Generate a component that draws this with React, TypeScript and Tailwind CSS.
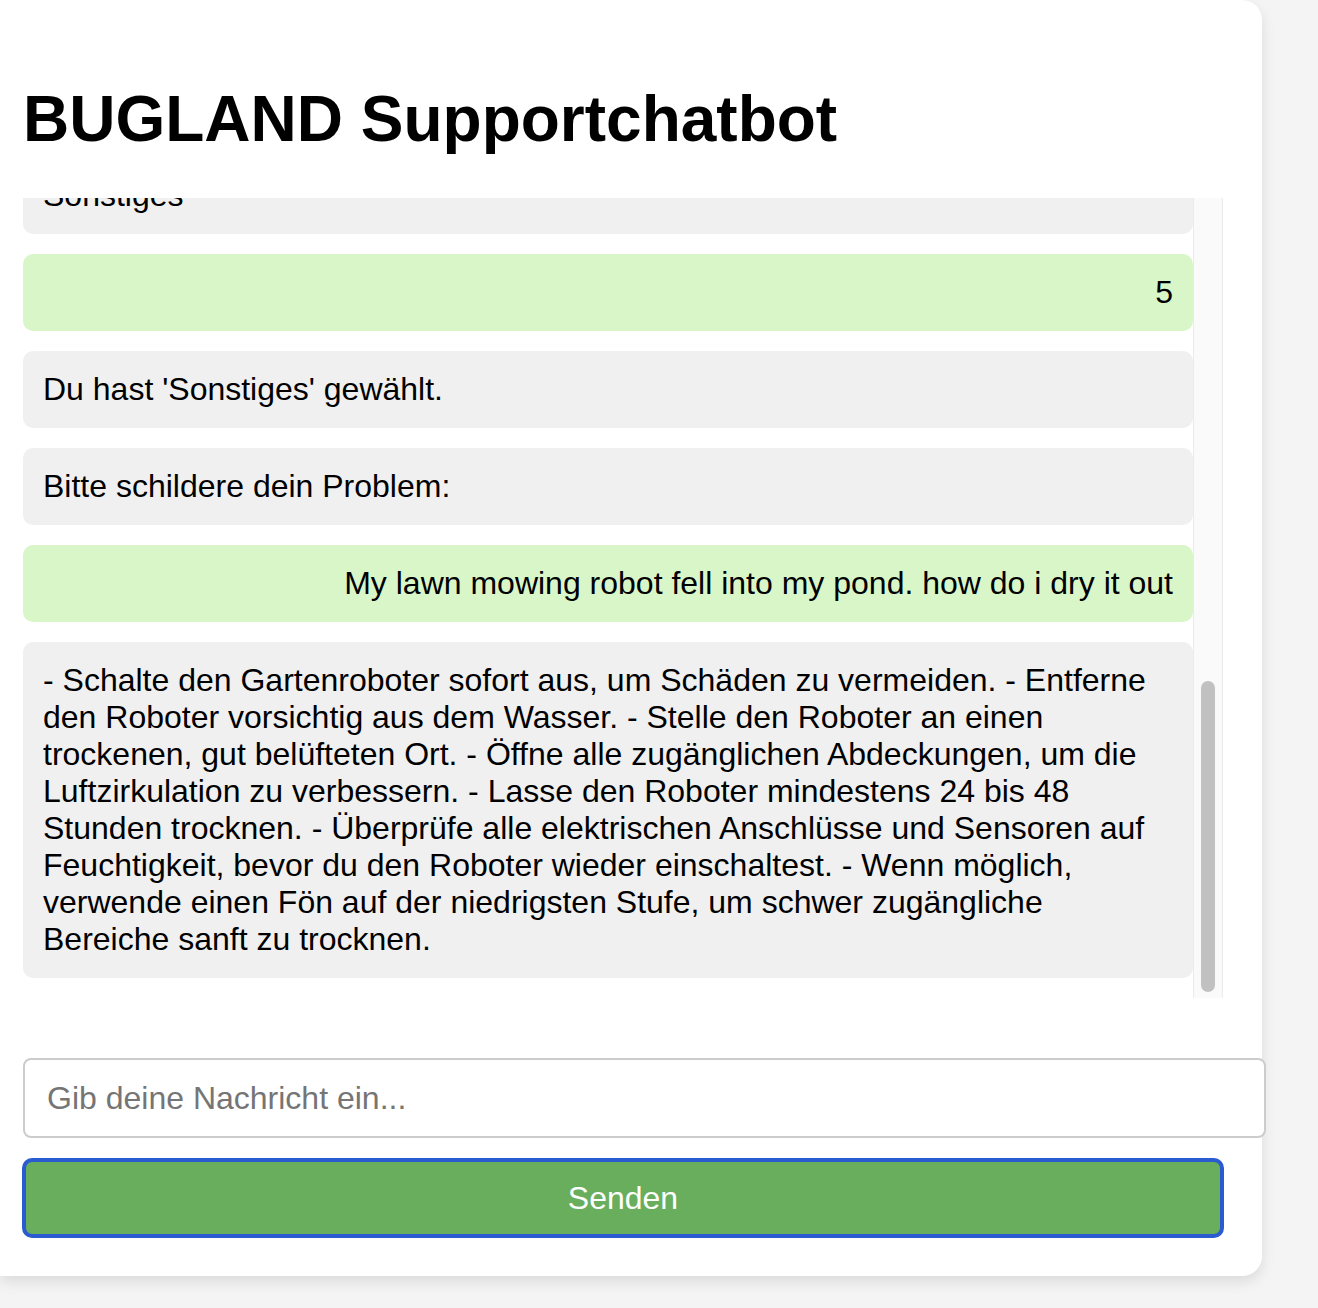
import { useLayoutEffect, useRef } from "react";

type Msg = { from: "bot" | "user"; text: string };

const messages: Msg[] = [
  { from: "bot", text: "Willkommen beim BUGLAND Support! Wie ist dein Name?" },
  { from: "user", text: "Max" },
  { from: "bot", text: "Hallo Max! Um welches Produkt geht es?" },
  { from: "user", text: "Mähroboter" },
  { from: "bot", text: "Bitte gib die Seriennummer deines Geräts ein:" },
  { from: "user", text: "BL-2024-88731" },
  { from: "bot", text: "Danke! Die Seriennummer wurde erkannt." },
  { from: "bot", text: "Hast du das Gerät bereits neu gestartet?" },
  { from: "user", text: "ja" },
  {
    from: "bot",
    text: "Bitte wähle eine Kategorie (1-5):\nTechnisches Problem\nGarantie\nErsatzteile\nLieferung\nSonstiges",
  },
  { from: "user", text: "5" },
  { from: "bot", text: "Du hast 'Sonstiges' gewählt." },
  { from: "bot", text: "Bitte schildere dein Problem:" },
  { from: "user", text: "My lawn mowing robot fell into my pond. how do i dry it out" },
  {
    from: "bot",
    text: "- Schalte den Gartenroboter sofort aus, um Schäden zu vermeiden. - Entferne den Roboter vorsichtig aus dem Wasser. - Stelle den Roboter an einen trockenen, gut belüfteten Ort. - Öffne alle zugänglichen Abdeckungen, um die Luftzirkulation zu verbessern. - Lasse den Roboter mindestens 24 bis 48 Stunden trocknen. - Überprüfe alle elektrischen Anschlüsse und Sensoren auf Feuchtigkeit, bevor du den Roboter wieder einschaltest. - Wenn möglich, verwende einen Fön auf der niedrigsten Stufe, um schwer zugängliche Bereiche sanft zu trocknen.",
  },
];

export default function App() {
  const chatRef = useRef<HTMLDivElement>(null);

  // keep the log scrolled to the newest message
  useLayoutEffect(() => {
    const el = chatRef.current;
    if (el) el.scrollTop = el.scrollHeight;
  }, []);

  return (
    <div className="min-h-screen bg-[#f4f4f4] font-['Liberation_Sans',Arial,sans-serif] text-black">
      <div className="w-[1262px] rounded-r-[20px] bg-white pl-[23px] pr-[39px] pt-[82px] pb-[38px] shadow-[0_6px_14px_rgba(0,0,0,0.1)]">
        <h1 className="mb-[42px] text-[64px] font-bold leading-[74px]">BUGLAND Supportchatbot</h1>

        <div className="flex h-[800px] w-[1200px]">
          <div ref={chatRef} className="h-full w-[1170px] overflow-hidden">
            <div className="flex flex-col gap-[20px] pt-[20px] pb-[20px]">
              {messages.map((m, i) => (
                <div
                  key={i}
                  className={
                    m.from === "user"
                      ? "whitespace-pre-line rounded-[10px] bg-[#d9f6c9] p-[20px] text-right text-[32px] leading-[37px]"
                      : "whitespace-pre-line rounded-[10px] bg-[#f0f0f0] p-[20px] text-left text-[32px] leading-[37px]"
                  }
                >
                  {m.text}
                </div>
              ))}
            </div>
          </div>
          {/* scrollbar */}
          <div className="flex w-[30px] flex-col justify-end border-x border-[#ebebeb] bg-[#fafafa] px-[7px] pb-[6px]">
            <div className="h-[311px] rounded-full bg-[#c1c1c1]" />
          </div>
        </div>

        <input
          type="text"
          placeholder="Gib deine Nachricht ein..."
          className="mt-[60px] block h-[80px] w-[1243px] rounded-[8px] border-2 border-[#cccccc] bg-white px-[22px] text-[32px] outline-none placeholder:text-[#757575]"
        />
        <button
          type="button"
          className="mt-[20px] block h-[80px] w-[1202px] -ml-px rounded-[10px] border-[4px] border-[#2a5bd0] bg-[#68ae5c] text-[32px] text-white"
        >
          Senden
        </button>
      </div>
    </div>
  );
}
